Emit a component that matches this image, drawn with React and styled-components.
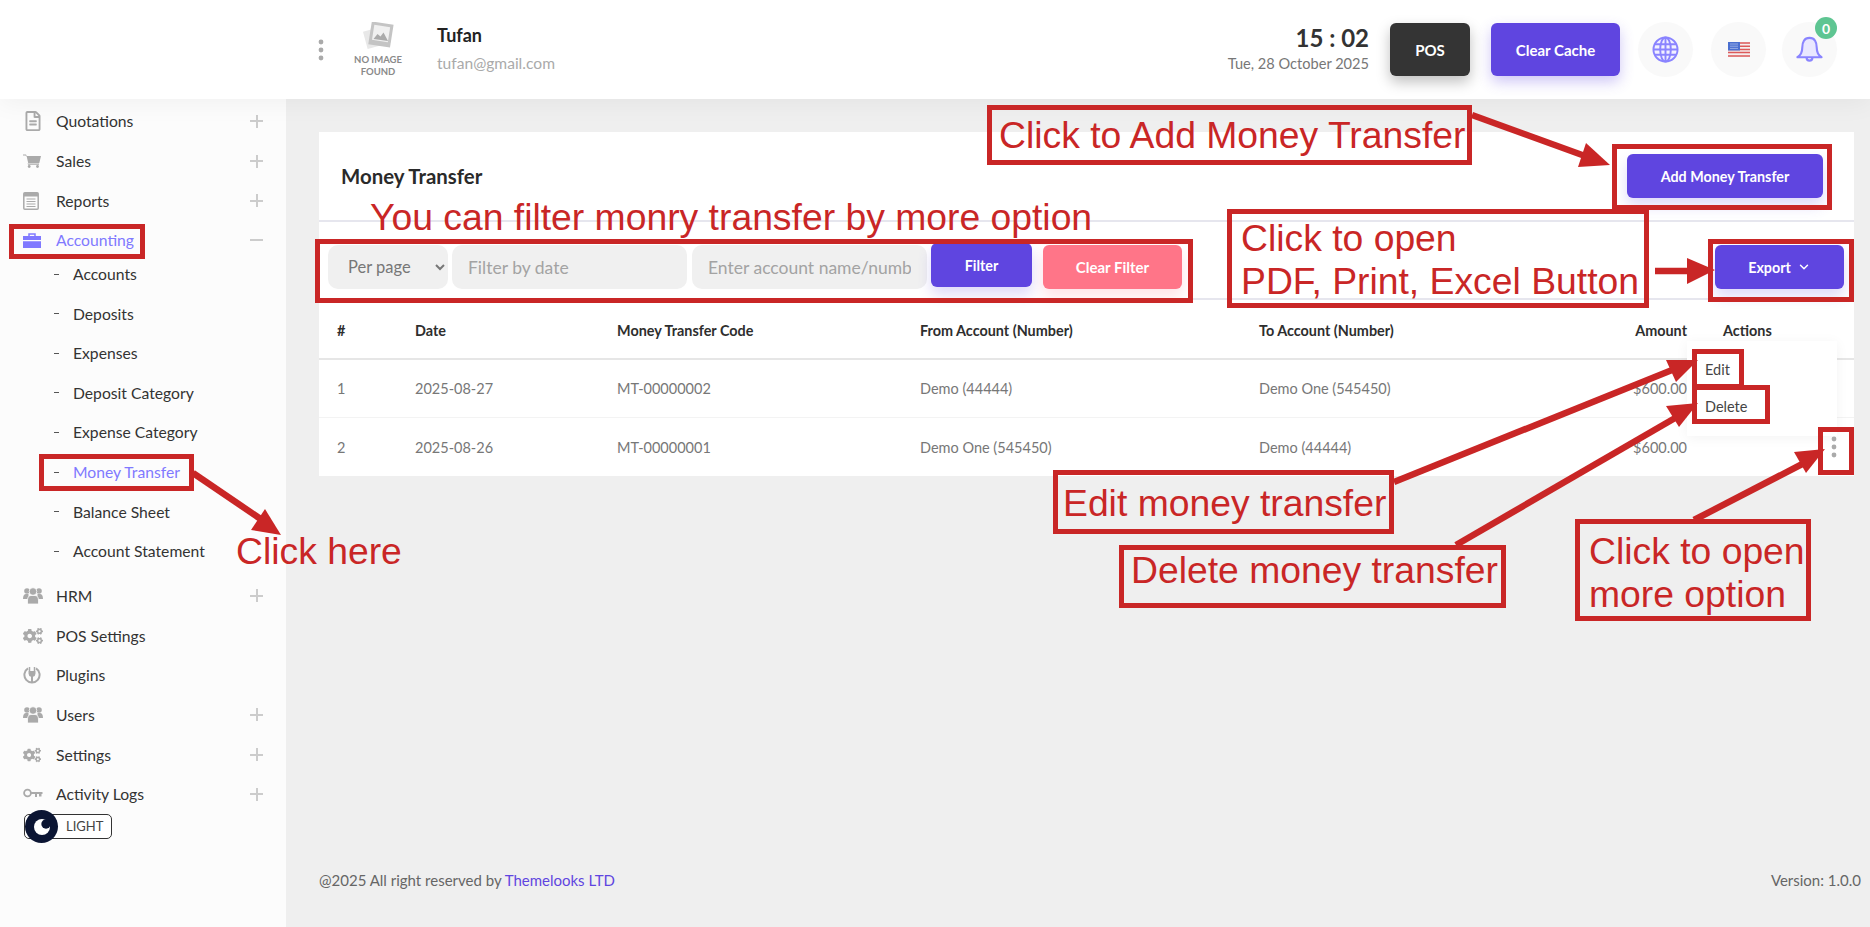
import React from "react";
import styled, { createGlobalStyle } from "styled-components";
import { FaRegFileAlt, FaCogs } from "react-icons/fa";
import { ChevronDown } from "lucide-react";

const RED = "#c92626";
const PURPLE = "#5f45e0";
const ICON_PURPLE = "#8a84ff";

const GlobalStyle = createGlobalStyle`
  html, body {
    margin: 0;
    padding: 0;
    background: #efefef;
  }
  * {
    box-sizing: border-box;
  }
  body {
    font-family: Lato, "Noto Sans", sans-serif;
    color: #333;
  }
`;

const KebabIcon = () => (
  <svg width="6" height="22" viewBox="0 0 6 22" fill="#aaa">
    <circle cx="3" cy="3" r="2.400" />
    <circle cx="3" cy="11" r="2.400" />
    <circle cx="3" cy="19" r="2.400" />
  </svg>
);

const CartIcon = () => (
  <svg width="18" height="14" viewBox="0 0 18 14" fill="#aaa">
    <path d="M0 0.500h3l0.700 1.500H18l-1.700 7H5.200L3.700 2.500 2.400 1.500H0z" />
    <path d="M4.500 9.500h11.500v1.300H5.200z" />
    <circle cx="6.200" cy="12.500" r="1.400" />
    <circle cx="14.500" cy="12.500" r="1.400" />
  </svg>
);

const ReportsIcon = () => (
  <svg width="16" height="18" viewBox="0 0 16 18">
    <rect x="0.800" y="0.800" width="14.400" height="16.400" rx="1" fill="none" stroke="#aaa" strokeWidth="1.500" />
    <rect x="1" y="1" width="14" height="3.500" fill="#aaa" />
    <path d="M3.500 7h9M3.500 9.500h9M3.500 12h9M3.500 14.500h9" stroke="#aaa" strokeWidth="1.100" />
  </svg>
);

const BriefcaseIcon = () => (
  <svg width="18" height="15" viewBox="0 0 18 15">
    <path d="M6 3V1h6v2" fill="none" stroke="#8079ff" strokeWidth="1.500" />
    <path d="M0 3h18v4H0zM0 8.300h18V15H0z" fill="#8079ff" />
  </svg>
);

const UsersIcon = () => (
  <svg width="20" height="17" viewBox="0 0 20 17" fill="#aaa">
    <circle cx="4" cy="4" r="2.800" />
    <circle cx="16" cy="4" r="2.800" />
    <path d="M0 12c0-3.500 1.200-5 3-5h2.500v5zM20 12c0-3.500-1.200-5-3-5h-2.500v5z" />
    <circle cx="10" cy="4.500" r="3.800" stroke="#fcfcfc" strokeWidth="0.800" />
    <path d="M4.500 17v-4c0-3.200 1.800-4.500 3.500-4.500h4c1.700 0 3.500 1.300 3.500 4.500v4z" stroke="#fcfcfc" strokeWidth="0.800" />
  </svg>
);

const PluginIcon = () => (
  <svg width="18" height="18" viewBox="0 0 18 18" fill="none">
    <path d="M5 2.400a7.600 7.600 0 1 0 8 0" stroke="#aaa" strokeWidth="2" />
    <path d="M6.500 1v4M11.500 1v4" stroke="#aaa" strokeWidth="1.500" />
    <path d="M5.500 5h7v2.500a3.500 3.500 0 0 1-2.500 3.300V16H8v-5.200a3.500 3.500 0 0 1-2.500-3.300z" fill="#aaa" />
  </svg>
);

const KeyIcon = () => (
  <svg width="20" height="12" viewBox="0 0 20 12" fill="none">
    <circle cx="4.500" cy="5" r="3.400" stroke="#aaa" strokeWidth="1.800" />
    <path d="M8 4h11.500v2H8z" fill="#aaa" />
    <path d="M12 6h2v3h-2zM16 6h2.500v2.500H16z" fill="#aaa" />
  </svg>
);

const GlobeIcon = () => (
  <svg width="27" height="27" viewBox="0 0 28 28" fill="none" stroke={ICON_PURPLE} strokeWidth="2">
    <circle cx="14" cy="14" r="12.500" fill="#f2f1ff" />
    <ellipse cx="14" cy="14" rx="5.500" ry="12.500" />
    <path d="M14 1.500v25M3 8.500h22M1.500 14h25M3 19.500h22" />
  </svg>
);

const BellIcon = () => (
  <svg width="27" height="27" viewBox="0 0 28 28" fill="#e9e7ff" stroke={ICON_PURPLE} strokeWidth="2.200" strokeLinejoin="round">
    <path d="M14 2c-5.500 0-7.500 4.500-7.500 10 0 5-1.500 8-5 10h25c-3.500-2-5-5-5-10 0-5.500-2-10-7.500-10z" />
    <path d="M11 22.500a3 3 0 0 0 6 0" fill="none" />
  </svg>
);

const FlagIcon = () => (
  <svg width="22" height="15" viewBox="0 0 22 15">
    <rect width="22" height="15" fill="#f6eeee" />
    <path d="M0 1h22M0 4.200h22M0 7.400h22M0 10.600h22M0 14h22" stroke="#dc5a5a" strokeWidth="1.500" />
    <rect width="12" height="8.500" fill="#4a6fd0" />
    <path d="M2.500 2h7M2.500 4.200h7M2.500 6.400h7" stroke="#e3e8fa" strokeWidth="1" strokeDasharray="1 1" />
  </svg>
);

const NoImageIcon = () => (
  <svg width="32" height="28" viewBox="0 0 32 28">
    <rect x="3" y="7" width="18" height="18" fill="#e8e8e8" transform="rotate(-15 12 16)" />
    <rect x="8" y="1" width="22" height="23" fill="#c4c4c4" transform="rotate(9 19 12)" />
    <rect x="11" y="4" width="16" height="15" fill="#f0f0f0" transform="rotate(9 19 12)" />
    <path d="M11.500 17l4-5 3 2.500 3-4 4.500 8.500z" fill="#aaa" />
  </svg>
);

const MoonIcon = () => (
  <svg width="18" height="18" viewBox="0 0 18 18">
    <circle cx="9" cy="9" r="8" fill="#fff" />
    <circle cx="13" cy="6" r="4.700" fill="#0b1533" />
  </svg>
);

const menuTop = [
  { label: "Quotations", icon: <FaRegFileAlt size={20} color="#aaa" />, more: true },
  { label: "Sales", icon: <CartIcon />, more: true },
  { label: "Reports", icon: <ReportsIcon />, more: true },
];

const subMenu = [
  "Accounts",
  "Deposits",
  "Expenses",
  "Deposit Category",
  "Expense Category",
  "Money Transfer",
  "Balance Sheet",
  "Account Statement",
];

const menuBottom = [
  { label: "HRM", icon: <UsersIcon />, more: true },
  { label: "POS Settings", icon: <FaCogs size={20} color="#aaa" /> },
  { label: "Plugins", icon: <PluginIcon /> },
  { label: "Users", icon: <UsersIcon />, more: true },
  { label: "Settings", icon: <FaCogs size={18} color="#aaa" />, more: true },
  { label: "Activity Logs", icon: <KeyIcon />, more: true },
];

const transfers = [
  { id: 1, date: "2025-08-27", code: "MT-00000002", from: "Demo (44444)", to: "Demo One (545450)", amount: "$600.00" },
  { id: 2, date: "2025-08-26", code: "MT-00000001", from: "Demo One (545450)", to: "Demo (44444)", amount: "$600.00" },
];

// red marks drawn over the screenshot: [x, y, w, h]
const marks = [
  [987, 105, 485, 60],
  [1612, 144, 220, 66],
  [315, 239, 878, 64],
  [1227, 209, 422, 99],
  [1708, 239, 146, 63],
  [9, 224, 136, 35],
  [39, 454, 155, 37],
  [1692, 349, 52, 40],
  [1692, 385, 78, 39],
  [1818, 427, 36, 48],
  [1053, 470, 341, 64],
  [1119, 545, 387, 63],
  [1575, 519, 236, 102],
];

const notes = [
  { x: 999, y: 114, text: "Click to Add Money Transfer" },
  { x: 370, y: 196, text: "You can filter monry transfer by more option" },
  { x: 1241, y: 217, text: "Click to open\nPDF, Print, Excel Button" },
  { x: 236, y: 530, text: "Click here" },
  { x: 1063, y: 482, text: "Edit money transfer" },
  { x: 1131, y: 549, text: "Delete money transfer" },
  { x: 1589, y: 530, text: "Click to open\nmore option" },
];

const arrows = [
  { line: "1472,115 1596,160", head: "1586,143 1578,167 1610,165" },
  { line: "1655,271 1690,271", head: "1687,258 1687,284 1715,270" },
  { line: "193,473 268,524", head: "265,509 251,530 281,535" },
  { line: "1394,482 1682,366", head: "1666,360 1676,382 1698,360" },
  { line: "1456,545 1682,414", head: "1666,406 1679,427 1698,403" },
  { line: "1694,520 1810,460", head: "1794,452 1806,473 1825,449" },
];

export default function App() {
  return (
    <Page>
      <GlobalStyle />
      <Header>
        <HeaderLeft>
          <KebabIcon />
          <Avatar>
            <NoImageIcon />
            <AvatarText>NO IMAGE FOUND</AvatarText>
          </Avatar>
          <UserInfo>
            <UserName>Tufan</UserName>
            <UserMail>tufan@gmail.com</UserMail>
          </UserInfo>
        </HeaderLeft>
        <HeaderRight>
          <Clock>
            <Time>15 : 02</Time>
            <DateText>Tue, 28 October 2025</DateText>
          </Clock>
          <TopButton $bg="#343434" $shadow="rgba(0,0,0,.25)" $width={80}>POS</TopButton>
          <TopButton $bg={PURPLE} $shadow="rgba(95,69,224,.3)" $width={129}>Clear Cache</TopButton>
          <CircleButton><GlobeIcon /></CircleButton>
          <CircleButton><FlagIcon /></CircleButton>
          <CircleButton $last>
            <BellIcon />
            <Badge>0</Badge>
          </CircleButton>
        </HeaderRight>
      </Header>

      <Body>
        <Sidebar>
          {menuTop.map((item) => (
            <MenuRow key={item.label}>
              <MenuIcon>{item.icon}</MenuIcon>
              <MenuLabel>{item.label}</MenuLabel>
              {item.more && <PlusMark />}
            </MenuRow>
          ))}
          <MenuRow>
            <MenuIcon><BriefcaseIcon /></MenuIcon>
            <MenuLabel $active>Accounting</MenuLabel>
            <PlusMark $minus />
          </MenuRow>
          <SubList>
            {subMenu.map((label) => (
              <SubRow key={label}>
                <Dash />
                <MenuLabel $active={label === "Money Transfer"}>{label}</MenuLabel>
              </SubRow>
            ))}
          </SubList>
          {menuBottom.map((item) => (
            <MenuRow key={item.label}>
              <MenuIcon>{item.icon}</MenuIcon>
              <MenuLabel>{item.label}</MenuLabel>
              {item.more && <PlusMark />}
            </MenuRow>
          ))}
          <ThemeToggle>
            <MoonKnob><MoonIcon /></MoonKnob>
            LIGHT
          </ThemeToggle>
        </Sidebar>

        <Main>
          <Card>
            <CardHead>
              <CardTitle>Money Transfer</CardTitle>
              <ActionButton $width={196}>Add Money Transfer</ActionButton>
            </CardHead>
            <FilterBar>
              <Select defaultValue="">
                <option value="">Per page</option>
              </Select>
              <Field placeholder="Filter by date" />
              <Field placeholder="Enter account name/number" />
              <ActionButton $width={101} $raised>Filter</ActionButton>
              <ActionButton $width={139} $bg="#ff7588" $shadow="rgba(255,117,136,.2)" $gap={7} $large>Clear Filter</ActionButton>
              <ActionButton $width={129} $push>
                Export <ChevronDown size={14} strokeWidth={2.5} />
              </ActionButton>
            </FilterBar>
            <Table>
              <colgroup>
                <col width="78" />
                <col width="202" />
                <col width="303" />
                <col width="339" />
                <col width="359" />
                <col width="105" />
                <col width="149" />
              </colgroup>
              <thead>
                <tr>
                  <Th>#</Th>
                  <Th>Date</Th>
                  <Th>Money Transfer Code</Th>
                  <Th>From Account (Number)</Th>
                  <Th>To Account (Number)</Th>
                  <Th $right>Amount</Th>
                  <Th>Actions</Th>
                </tr>
              </thead>
              <tbody>
                {transfers.map((row, i) => (
                  <Row key={row.id}>
                    <Td>{row.id}</Td>
                    <Td>{row.date}</Td>
                    <Td>{row.code}</Td>
                    <Td>{row.from}</Td>
                    <Td>{row.to}</Td>
                    <Td $right>{row.amount}</Td>
                    <ActionCell>
                      {i === 1 && (
                        <>
                          <RowMenu>
                            <RowMenuItem>Edit</RowMenuItem>
                            <RowMenuItem>Delete</RowMenuItem>
                          </RowMenu>
                          <Kebab><KebabIcon /></Kebab>
                        </>
                      )}
                    </ActionCell>
                  </Row>
                ))}
              </tbody>
            </Table>
          </Card>
          <Footer>
            <span>@2025 All right reserved by <FooterLink>Themelooks LTD</FooterLink></span>
            <span>Version: 1.0.0</span>
          </Footer>
        </Main>
      </Body>

      <Arrows viewBox="0 0 1870 927">
        {arrows.map((a) => (
          <g key={a.head}>
            <polyline points={a.line} stroke={RED} strokeWidth="6.5" fill="none" />
            <polygon points={a.head} fill={RED} />
          </g>
        ))}
      </Arrows>
      {marks.map(([x, y, w, h]) => (
        <Mark key={`${x}-${y}`} $x={x} $y={y} $w={w} $h={h} />
      ))}
      {notes.map((n) => (
        <Note key={n.text} $x={n.x} $y={n.y}>{n.text}</Note>
      ))}
    </Page>
  );
}

const Page = styled.div`
  position: relative;
  width: 1870px;
  height: 927px;
  overflow: hidden;
  display: flex;
  flex-direction: column;
`;

const Header = styled.header`
  height: 99px;
  flex: none;
  background: #fff;
  display: flex;
  align-items: center;
  justify-content: space-between;
  padding: 0 33px 0 318px;
  box-shadow: 0 4px 24px rgba(0, 0, 0, 0.05);
  position: relative;
  z-index: 2;
`;

const HeaderLeft = styled.div`
  display: flex;
  align-items: center;
`;

const Avatar = styled.div`
  width: 62px;
  margin-left: 23px;
  display: flex;
  flex-direction: column;
  align-items: center;
`;

const AvatarText = styled.div`
  font-size: 9.500px;
  line-height: 11.500px;
  font-weight: 700;
  color: #8a8a8a;
  text-align: center;
  width: 56px;
  margin-top: 4px;
`;

const UserInfo = styled.div`
  margin-left: 28px;
  margin-top: -4px;
`;

const UserName = styled.div`
  font-size: 18px;
  font-weight: 700;
  color: #222;
  line-height: 24px;
`;

const UserMail = styled.div`
  font-size: 15.600px;
  color: #aaa;
  line-height: 20px;
  margin-top: 6px;
`;

const HeaderRight = styled.div`
  display: flex;
  align-items: center;
  gap: 18px;
`;

const Clock = styled.div`
  text-align: right;
  margin-right: 3px;
  margin-top: -3px;
`;

const Time = styled.div`
  font-size: 24px;
  font-weight: 700;
  line-height: 30px;
  color: #333;
`;

const DateText = styled.div`
  font-size: 14.600px;
  line-height: 20px;
  color: #777;
  margin-top: 1px;
`;

const TopButton = styled.button`
  width: ${(p) => p.$width}px;
  height: 53px;
  border: 0;
  border-radius: 6px;
  background: ${(p) => p.$bg};
  color: #fff;
  font-family: inherit;
  font-size: 15px;
  font-weight: 700;
  box-shadow: 0 6px 14px ${(p) => p.$shadow};
  & + & {
    margin-left: 3px;
  }
`;

const CircleButton = styled.div`
  position: relative;
  width: 55px;
  height: 55px;
  border-radius: 50%;
  background: #f9f9f9;
  display: flex;
  align-items: center;
  justify-content: center;
  margin-left: ${(p) => (p.$last ? "-2px" : "0")};
`;

const Badge = styled.span`
  position: absolute;
  top: -5px;
  right: 0;
  width: 22px;
  height: 22px;
  border-radius: 50%;
  background: #5ec592;
  color: #fff;
  font-size: 14px;
  font-weight: 700;
  display: flex;
  align-items: center;
  justify-content: center;
`;

const Body = styled.div`
  flex: 1;
  display: flex;
  min-height: 0;
`;

const Sidebar = styled.aside`
  width: 286px;
  flex: none;
  background: #fcfcfc;
  padding: 2.500px 0 0;
  position: relative;
`;

const MenuRow = styled.div`
  height: 39.7px;
  display: flex;
  align-items: center;
  padding: 0 23px;
`;

const MenuIcon = styled.span`
  width: 33px;
  flex: none;
  display: flex;
  align-items: center;
`;

const MenuLabel = styled.span`
  flex: 1;
  font-size: 15.700px;
  color: ${(p) => (p.$active ? "#8079ff" : "#333")};
`;

const PlusMark = styled.span`
  position: relative;
  width: 13px;
  height: 13px;
  flex: none;
  &::before {
    content: "";
    position: absolute;
    left: 0;
    right: 0;
    top: 5.500px;
    height: 2px;
    background: #ccc;
  }
  &::after {
    content: "";
    display: ${(p) => (p.$minus ? "none" : "block")};
    position: absolute;
    top: 0;
    bottom: 0;
    left: 5.500px;
    width: 2px;
    background: #ccc;
  }
`;

const SubList = styled.div`
  margin: -6px 0 5px;
`;

const SubRow = styled.div`
  height: 39.6px;
  display: flex;
  align-items: center;
  padding-left: 54px;
`;

const Dash = styled.span`
  width: 5px;
  height: 1px;
  background: #555;
  margin-right: 14px;
  flex: none;
`;

const ThemeToggle = styled.div`
  position: relative;
  width: 88px;
  height: 25px;
  margin-left: 24px;
  border: 1px solid #333;
  border-radius: 5px;
  background: #fff;
  font-size: 13px;
  color: #444;
  line-height: 23px;
  padding-left: 41px;
`;

const MoonKnob = styled.span`
  position: absolute;
  left: 0;
  top: -5px;
  width: 33px;
  height: 33px;
  border-radius: 50%;
  background: #0b1533;
  display: flex;
  align-items: center;
  justify-content: center;
`;

const Main = styled.main`
  flex: 1;
  min-width: 0;
  display: flex;
  flex-direction: column;
  padding: 33px 16px 0 33px;
`;

const Card = styled.section`
  background: #fff;
`;

const CardHead = styled.div`
  height: 88px;
  display: flex;
  align-items: center;
  justify-content: space-between;
  padding: 0 31px 0 22px;
`;

const CardTitle = styled.h2`
  margin: 0;
  font-size: 20.400px;
  font-weight: 700;
  color: #2a2a2a;
`;

const ActionButton = styled.button`
  width: ${(p) => p.$width}px;
  height: 44px;
  border: 0;
  border-radius: 6px;
  background: ${(p) => p.$bg || PURPLE};
  color: #fff;
  font-family: inherit;
  font-size: ${(p) => (p.$large ? "15px" : "14.300px")};
  font-weight: 700;
  display: inline-flex;
  align-items: center;
  justify-content: center;
  gap: 6px;
  flex: none;
  box-shadow: 0 8px 14px ${(p) => p.$shadow || "rgba(95,69,224,.2)"};
  margin-left: ${(p) => (p.$push ? "auto" : p.$gap ? `${p.$gap}px` : "0")};
  margin-bottom: ${(p) => (p.$raised ? "4px" : "0")};
`;

const FilterBar = styled.div`
  height: 80px;
  display: flex;
  align-items: center;
  gap: 4px;
  padding: 14px 10px 0 9px;
  border-top: 2px solid #e6e6ee;
  border-bottom: 2px solid #e6e6ee;
`;

const Select = styled.select`
  width: 120px;
  height: 44px;
  border: 0;
  border-radius: 10px;
  background: #f0f0f0;
  color: #777;
  font-family: inherit;
  font-size: 16.500px;
  padding: 0 12px 0 16px;
  flex: none;
`;

const Field = styled.input`
  width: 235px;
  height: 44px;
  border: 0;
  border-radius: 10px;
  background: #f0f0f0;
  font-family: inherit;
  font-size: 17.500px;
  padding: 0 16px;
  flex: none;
  & + & {
    margin-left: 1px;
  }
  &::placeholder {
    color: #a3a3a3;
    opacity: 1;
  }
`;

const Table = styled.table`
  width: 100%;
  table-layout: fixed;
  border-collapse: collapse;
`;

const Th = styled.th`
  height: 59px;
  padding: 2px 18px 0;
  text-align: ${(p) => (p.$right ? "right" : "left")};
  font-size: 14.400px;
  font-weight: 700;
  color: #2e2e2e;
  border-bottom: 2px solid #e6e6e6;
`;

const Row = styled.tr`
  & + & td {
    border-top: 1px solid #f3f3f3;
  }
`;

const Td = styled.td`
  height: 58.500px;
  padding: 0 18px;
  text-align: ${(p) => (p.$right ? "right" : "left")};
  font-size: 14.500px;
  color: #777;
`;

const ActionCell = styled(Td)`
  position: relative;
`;

const Kebab = styled.span`
  position: absolute;
  left: 126px;
  top: 18px;
  display: flex;
`;

const RowMenu = styled.div`
  position: absolute;
  left: -18px;
  top: -77px;
  width: 150px;
  height: 95px;
  padding-top: 11px;
  background: #fff;
  box-shadow: 0 2px 12px rgba(0, 0, 0, 0.05);
`;

const RowMenuItem = styled.div`
  height: 37px;
  line-height: 36px;
  padding-left: 18px;
  font-size: 14.500px;
  color: #444;
`;

const Footer = styled.footer`
  margin-top: auto;
  margin-bottom: 37px;
  display: flex;
  justify-content: space-between;
  font-size: 15px;
  line-height: 20px;
  color: #666;
  margin-right: -7px;
`;

const FooterLink = styled.span`
  color: ${PURPLE};
`;

const Arrows = styled.svg`
  position: absolute;
  inset: 0;
  width: 1870px;
  height: 927px;
  z-index: 5;
  pointer-events: none;
`;

const Mark = styled.div`
  position: absolute;
  left: ${(p) => p.$x}px;
  top: ${(p) => p.$y}px;
  width: ${(p) => p.$w}px;
  height: ${(p) => p.$h}px;
  border: 5px solid ${RED};
  z-index: 6;
`;

const Note = styled.div`
  position: absolute;
  left: ${(p) => p.$x}px;
  top: ${(p) => p.$y}px;
  z-index: 7;
  font-family: "Liberation Sans", Arial, sans-serif;
  font-size: 37.300px;
  line-height: 43px;
  color: ${RED};
  white-space: pre;
`;
